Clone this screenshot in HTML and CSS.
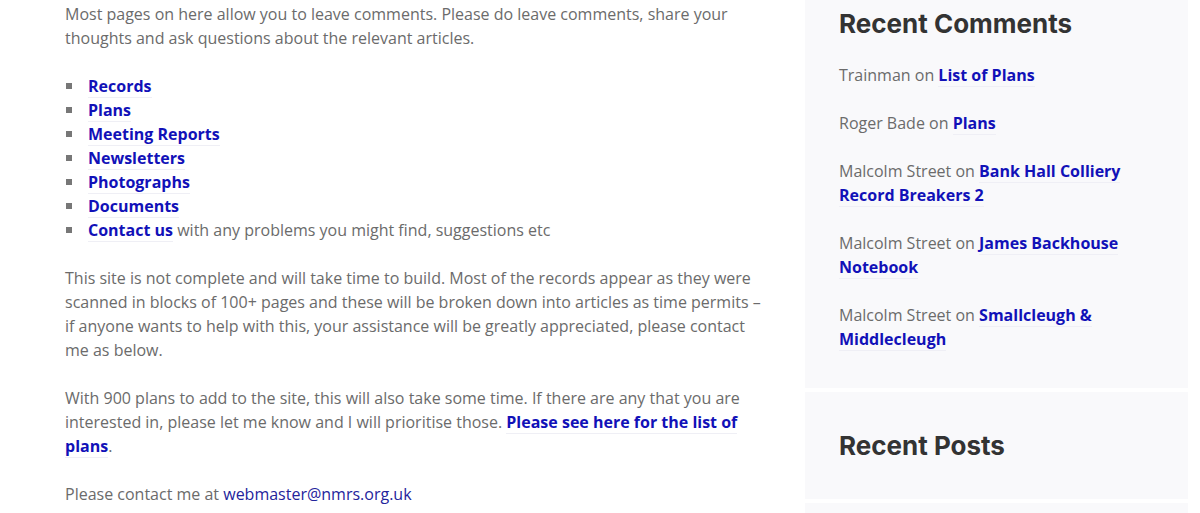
FILE: index.html
```html
<!DOCTYPE html>
<html lang="en">
<head>
    <meta charset="UTF-8">
    <meta name="viewport" content="width=device-width, initial-scale=1.0">
    <title>Welcome</title>
    <link rel="stylesheet" href="styles.css">
</head>
<body>
    <div class="site">
        <main class="content">
            <p>Most pages on here allow you to leave comments. Please do leave comments, share your thoughts and ask questions about the relevant articles.</p>

            <ul class="links">
                <li><a href="#">Records</a></li>
                <li><a href="#">Plans</a></li>
                <li><a href="#">Meeting Reports</a></li>
                <li><a href="#">Newsletters</a></li>
                <li><a href="#">Photographs</a></li>
                <li><a href="#">Documents</a></li>
                <li><a href="#">Contact us</a> with any problems you might find, suggestions etc</li>
            </ul>

            <p>This site is not complete and will take time to build. Most of the records appear as they were scanned in blocks of 100+ pages and these will be broken down into articles as time permits &ndash; if anyone wants to help with this, your assistance will be greatly appreciated, please contact me as below.</p>

            <p>With 900 plans to add to the site, this will also take some time. If there are any that you are interested in, please let me know and I will prioritise those. <a href="#">Please see here for the list of plans</a>.</p>

            <p>Please contact me at <a class="mail" href="#">webmaster@nmrs.org.uk</a></p>
        </main>

        <aside class="sidebar">
            <section class="widget comments">
                <h2>Recent Comments</h2>
                <ul>
                    <li>Trainman on <a href="#">List of Plans</a></li>
                    <li>Roger Bade on <a href="#">Plans</a></li>
                    <li>Malcolm Street on <a href="#">Bank Hall Colliery Record Breakers 2</a></li>
                    <li>Malcolm Street on <a href="#">James Backhouse Notebook</a></li>
                    <li>Malcolm Street on <a href="#">Smallcleugh &amp; Middlecleugh</a></li>
                </ul>
            </section>
            <section class="widget posts">
                <h2>Recent Posts</h2>
            </section>
            <section class="widget next"></section>
        </aside>
    </div>
</body>
</html>
```

FILE: styles.css
```css
body {
    margin: 0;
    font-family: "Open Sans", sans-serif;
    font-size: 16px;
    line-height: 24px;
    color: #6b6b6b;
    background: #fff;
    overflow: hidden;
}

.site {
    display: flex;
    align-items: flex-start;
    gap: 40px;
    padding-left: 65px;
}

.content {
    width: 700px;
    flex-shrink: 0;
    padding-top: 2px;
}

.content p {
    margin: 0 0 24px;
}

a {
    color: #1111b8;
    font-weight: 700;
    text-decoration: none;
    border-bottom: 1px solid #efeff5;
}

a.mail {
    font-weight: 400;
    color: #24249c;
    border-bottom: none;
}

.links {
    margin: 0 0 24px;
    padding: 0 0 0 23px;
    list-style: none;
}

.links li {
    position: relative;
}

.links li::before {
    content: "";
    position: absolute;
    left: -22px;
    top: 9px;
    width: 6px;
    height: 6px;
    background: #777;
}

.sidebar {
    width: 383px;
    flex-shrink: 0;
    margin-top: -39px;
    display: flex;
    flex-direction: column;
    gap: 4px;
}

.widget {
    background: #f9f9fb;
    padding: 40px 34px 37px;
}

.widget h2 {
    margin: 0;
    font-family: Inter, sans-serif;
    font-weight: 700;
    font-size: 26px;
    line-height: 46px;
    color: #333;
}

.widget ul {
    margin: 16px 0 0;
    padding: 0;
    list-style: none;
}

.widget li + li {
    margin-top: 24px;
}

.posts {
    padding: 31px 34px 30px;
}

.next {
    height: 40px;
    padding: 0;
}
```
